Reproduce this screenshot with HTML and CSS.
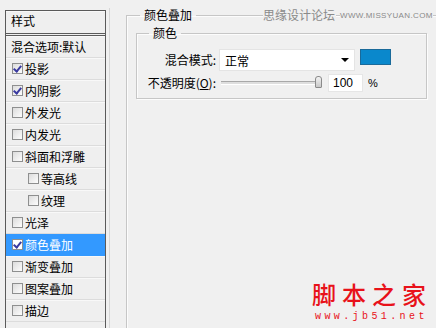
FILE: index.html
```html
<!DOCTYPE html>
<html>
<head>
<meta charset="utf-8">
<link rel="stylesheet" href="styles.css">
</head>
<body>
<div class="dialog">
  <div class="styles-panel">
    <div class="row head">样式</div>
    <div class="row">混合选项:默认</div>
    <div class="row"><span class="cb on"></span>投影</div>
    <div class="row"><span class="cb on"></span>内阴影</div>
    <div class="row"><span class="cb"></span>外发光</div>
    <div class="row"><span class="cb"></span>内发光</div>
    <div class="row"><span class="cb"></span>斜面和浮雕</div>
    <div class="row sub"><span class="cb"></span>等高线</div>
    <div class="row sub"><span class="cb"></span>纹理</div>
    <div class="row"><span class="cb"></span>光泽</div>
    <div class="row sel"><span class="cb on"></span>颜色叠加</div>
    <div class="row"><span class="cb"></span>渐变叠加</div>
    <div class="row"><span class="cb"></span>图案叠加</div>
    <div class="row"><span class="cb"></span>描边</div>
  </div>
  <div class="panel-edge"></div>
  <div class="main">
    <fieldset class="group outer">
      <legend class="legend">颜色叠加</legend>
      <fieldset class="group inner">
        <legend class="legend inner-legend">颜色</legend>
        <div class="form">
          <div class="label">混合模式:</div>
          <div class="ctrl">
            <div class="select"><span>正常</span><span class="arrow"></span></div>
            <div class="swatch"></div>
          </div>
          <div class="label">不透明度(<u>O</u>):</div>
          <div class="ctrl ctrl2">
            <div class="slider"><div class="track"></div><div class="thumb"></div></div>
            <div class="num">100</div>
            <div class="pct">%</div>
          </div>
        </div>
      </fieldset>
    </fieldset>
    <div class="wm-top"><span class="wm-cn">思缘设计论坛</span><span class="wm-en">WWW.MISSYUAN.COM</span></div>
    <div class="wm-bottom">
      <div class="wm-logo">脚本之家</div>
      <div class="wm-url">www.jb51.net</div>
    </div>
  </div>
</div>
</body>
</html>
```
FILE: styles.css
```css
html, body {
  margin: 0;
  padding: 0;
  background: #f0f0f0;
  overflow: hidden;
}
body {
  width: 436px;
  height: 328px;
  font-family: "Noto Sans CJK SC", "Liberation Sans", sans-serif;
  font-size: 12px;
  color: #000;
}
.dialog {
  display: flex;
  height: 328px;
}
.styles-panel {
  margin-left: 5px;
  margin-top: 10px;
  width: 101px;
  box-sizing: border-box;
  border: 1px solid #5a5a5a;
  border-bottom: none;
  background: #efefef;
  height: 318px;
  overflow: hidden;
  flex: none;
}
.panel-edge {
  width: 1px;
  margin-left: 3px;
  margin-top: 8px;
  background: #d6d6d6;
  flex: none;
}
.row {
  height: 22px;
  box-sizing: border-box;
  border-bottom: 1px solid #dcdcdc;
  box-shadow: inset 0 1px 0 #f8f8f8;
  display: flex;
  align-items: center;
  padding-left: 5px;
  line-height: 14px;
  white-space: nowrap;
}
.row.head {
  border-bottom: 3px double #5a5a5a;
  height: 25px;
  padding-bottom: 2px;
}
.row .cb {
  margin-left: 1px;
  margin-right: 2px;
}
.row.sub {
  padding-left: 21px;
}
.row.sel {
  background: #3399ff;
  color: #fff;
  box-shadow: none;
  border-bottom-color: #3399ff;
}
.cb {
  width: 11px;
  height: 11px;
  box-sizing: border-box;
  border: 1px solid #8e8f8f;
  background: linear-gradient(135deg, #dcdcdc, #fdfdfd);
  flex: none;
  position: relative;
}
.cb.on::after {
  content: "";
  position: absolute;
  left: 2px;
  top: 0px;
  width: 3px;
  height: 6px;
  border: solid #3a3aa0;
  border-width: 0 2px 2px 0;
  transform: rotate(40deg);
}
.sel .cb {
  background: #fff;
}
.main {
  margin-left: 16px;
  width: 311px;
  position: relative;
  flex: none;
}
.group {
  margin: 0;
  padding: 0;
  box-sizing: border-box;
  border: 1px solid #c6c6c6;
  box-shadow: inset 1px 1px 0 #fcfcfc, 1px 1px 0 #fcfcfc;
  min-width: 0;
}
.outer {
  margin-top: 8px;
  width: 311px;
  height: 320px;
  border-bottom: none;
}
.legend {
  margin-left: 13px;
  padding: 0 4px;
  line-height: 14px;
  font-size: 12px;
}
.inner {
  margin: 4px 9px 0 9px;
  padding: 9px 0 5px 0;
}
.inner-legend {
  margin-left: 12px;
}
.form {
  display: grid;
  grid-template-columns: 79px 1fr;
  column-gap: 3px;
  row-gap: 2px;
  align-items: center;
}
.label {
  text-align: right;
  white-space: nowrap;
  line-height: 14px;
}
.label u {
  text-decoration: underline;
}
.ctrl {
  display: flex;
  align-items: center;
  height: 22px;
}
.ctrl2 {
  height: 20px;
}
.select {
  width: 136px;
  height: 22px;
  box-sizing: border-box;
  background: #fff;
  border: 1px solid #e4e4e4;
  display: flex;
  align-items: center;
  justify-content: space-between;
  padding: 0 5px 0 5px;
}
.arrow {
  width: 0;
  height: 0;
  border-left: 4px solid transparent;
  border-right: 4px solid transparent;
  border-top: 4px solid #000;
}
.swatch {
  width: 31px;
  height: 16px;
  box-sizing: border-box;
  margin-left: 5px;
  margin-top: -6px;
  background: #0a88cc;
  border: 1px solid #1a6a9a;
}
.slider {
  width: 104px;
  height: 20px;
  position: relative;
  flex: none;
}
.track {
  position: absolute;
  left: 2px;
  right: 5px;
  top: 8px;
  height: 2px;
  border-top: 1px solid #a8a8a8;
  border-bottom: 1px solid #fff;
  background: #dedede;
}
.thumb {
  position: absolute;
  right: 1px;
  top: 3px;
  width: 7px;
  height: 12px;
  box-sizing: border-box;
  border: 1px solid #8a8a8a;
  border-radius: 3px 3px 1px 1px;
  background: linear-gradient(#f4f4f4, #c8c8c8);
}
.num {
  width: 35px;
  height: 18px;
  box-sizing: border-box;
  background: #fff;
  border: 1px solid #e6e6e6;
  margin-left: 5px;
  padding-left: 4px;
  line-height: 16px;
  font-family: "Liberation Sans", sans-serif;
  font-size: 12px;
}
.pct {
  margin-left: 5px;
  font-family: "Liberation Sans", sans-serif;
  font-size: 11px;
}
.wm-top {
  position: absolute;
  left: 137px;
  top: 7px;
  display: flex;
  align-items: center;
  color: #8a8a8a;
  white-space: nowrap;
  line-height: 16px;
}
.wm-cn {
  background: #f0f0f0;
  font-size: 12px;
  padding-right: 1px;
}
.wm-en {
  background: #f0f0f0;
  margin-left: 4px;
  font-family: "Liberation Sans", sans-serif;
  font-size: 8px;
  letter-spacing: 0.35px;
  line-height: 10px;
  padding-top: 1px;
}
.wm-bottom {
  position: absolute;
  left: 186px;
  top: 281px;
  color: #e8121a;
}
.wm-logo {
  font-size: 24px;
  line-height: 26px;
  letter-spacing: 6px;
  white-space: nowrap;
  font-weight: 500;
}
.wm-url {
  font-family: "Liberation Mono", monospace;
  font-size: 10px;
  line-height: 11px;
  letter-spacing: 3.4px;
  margin-top: 4px;
  margin-left: 3px;
  white-space: nowrap;
}
```
